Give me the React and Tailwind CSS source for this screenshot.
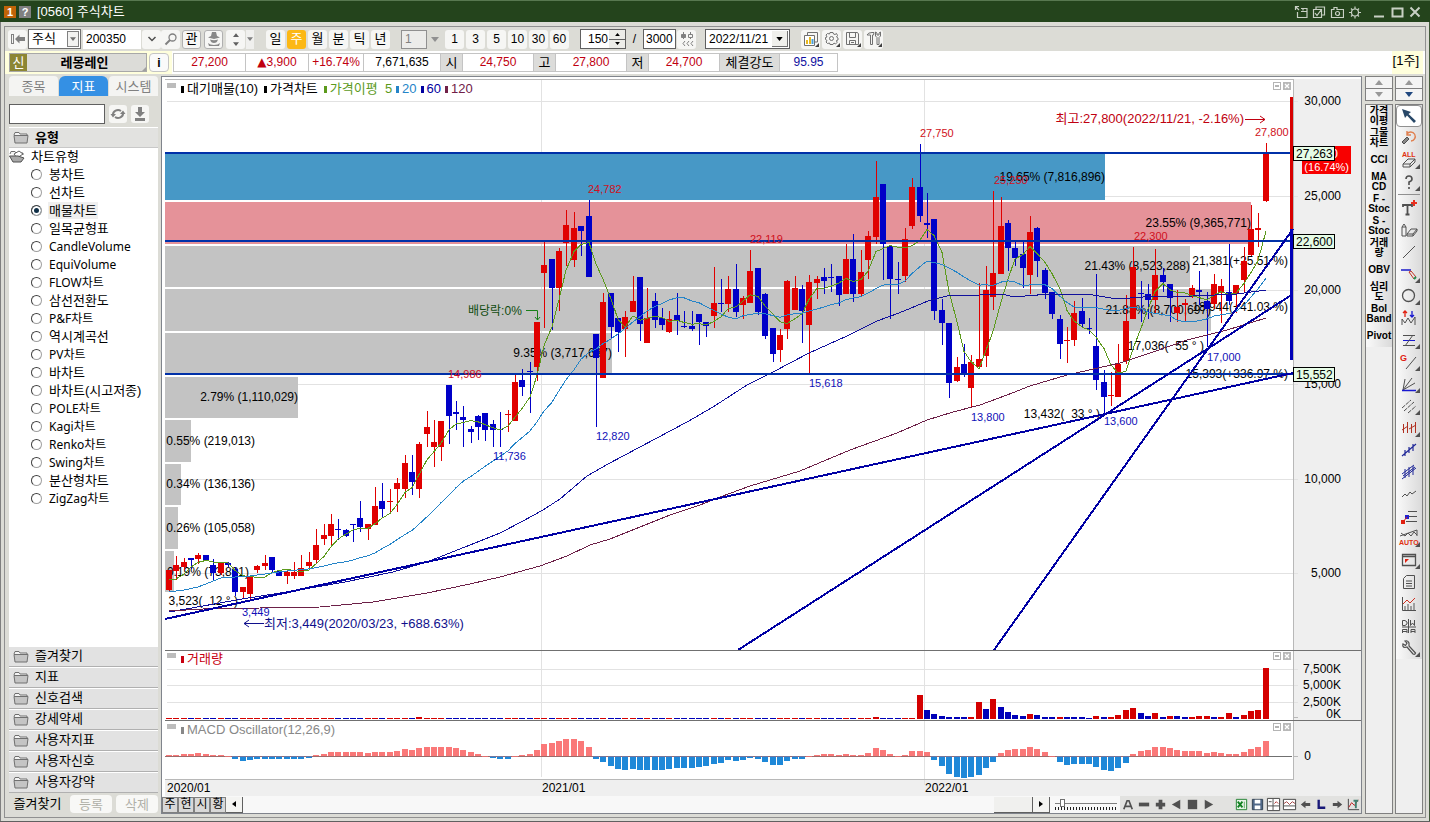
import React, { useState } from 'react';

// [high, bodyTop, bodyBottom, low, direction] in chart coordinates
const CANDLES = [
  [570, 570, 590, 592, 1], [556, 565, 571, 580, 1], [558, 562, 567, 570, 1], [558, 558, 560, 569, 0], [553, 555, 559, 564, 1],
  [555, 555, 560, 560, 0], [559, 565, 573, 581, 0], [562, 562, 573, 575, 1], [562, 563, 565, 567, 0], [567, 569, 592, 596, 0],
  [587, 587, 592, 599, 1], [575, 577, 594, 599, 1], [565, 566, 570, 573, 1], [555, 563, 566, 570, 1], [557, 557, 570, 572, 0],
  [570, 571, 576, 576, 0], [571, 572, 576, 584, 1], [562, 572, 576, 579, 1], [555, 568, 576, 576, 1], [552, 562, 566, 570, 1],
  [529, 545, 560, 564, 1], [524, 535, 539, 545, 1], [514, 524, 536, 545, 1], [519, 529, 530, 540, 0], [529, 530, 536, 537, 0],
  [524, 524, 525, 542, 0], [501, 518, 527, 532, 0], [524, 524, 529, 540, 1], [487, 506, 525, 525, 1], [483, 501, 509, 518, 0],
  [489, 501, 502, 513, 1], [478, 483, 489, 512, 1], [455, 463, 489, 498, 1], [455, 472, 482, 495, 0], [442, 444, 489, 498, 1],
  [411, 427, 434, 447, 1], [420, 442, 447, 467, 1], [421, 421, 447, 461, 1], [385, 385, 416, 444, 0], [401, 412, 414, 430, 0],
  [406, 417, 420, 447, 0], [426, 429, 432, 443, 0], [415, 416, 427, 440, 0], [413, 413, 430, 441, 0], [420, 424, 430, 447, 0],
  [412, 429, 430, 447, 0], [410, 414, 415, 432, 1], [374, 382, 421, 421, 1], [369, 380, 387, 396, 0], [362, 371, 372, 413, 0],
  [322, 322, 367, 381, 1], [242, 265, 273, 328, 1], [259, 259, 288, 330, 0], [248, 251, 288, 311, 1], [210, 225, 243, 266, 1],
  [212, 228, 260, 267, 1], [226, 226, 231, 256, 0], [200, 216, 277, 277, 0], [334, 334, 358, 427, 0], [293, 302, 378, 378, 1],
  [293, 293, 327, 338, 0], [318, 318, 332, 352, 0], [311, 317, 329, 357, 1], [276, 301, 312, 312, 1], [277, 277, 324, 341, 0],
  [288, 318, 343, 343, 1], [293, 301, 320, 328, 0], [308, 318, 325, 330, 0], [311, 319, 332, 333, 1], [293, 315, 321, 335, 0],
  [311, 326, 327, 328, 0], [311, 326, 329, 331, 0], [314, 314, 322, 345, 0], [322, 322, 326, 337, 0], [267, 303, 316, 328, 1],
  [279, 303, 304, 312, 0], [276, 289, 304, 312, 1], [264, 289, 312, 317, 0], [296, 298, 305, 319, 1], [250, 271, 303, 303, 1],
  [268, 268, 312, 315, 0], [293, 294, 336, 339, 0], [328, 328, 354, 362, 0], [329, 335, 350, 362, 1], [280, 281, 329, 339, 1],
  [276, 288, 310, 310, 1], [285, 289, 311, 343, 0], [275, 282, 325, 374, 1], [276, 279, 283, 299, 1], [268, 277, 281, 294, 0],
  [264, 277, 278, 292, 0], [276, 276, 295, 306, 0], [244, 259, 294, 294, 1], [234, 259, 294, 302, 0], [250, 272, 294, 296, 1],
  [231, 236, 260, 279, 1], [161, 197, 237, 244, 1], [184, 184, 244, 280, 0], [245, 246, 279, 319, 0], [262, 279, 280, 294, 0],
  [228, 239, 276, 282, 1], [178, 187, 226, 229, 1], [144, 187, 216, 222, 0], [193, 223, 225, 238, 0], [219, 219, 311, 320, 0],
  [299, 310, 323, 345, 0], [323, 323, 383, 398, 0], [357, 367, 381, 382, 1], [344, 364, 373, 377, 0], [355, 362, 388, 408, 1],
  [283, 359, 367, 368, 1], [266, 290, 356, 367, 1], [191, 273, 297, 310, 1], [197, 226, 274, 274, 1], [220, 223, 248, 271, 0],
  [240, 248, 258, 266, 0], [242, 254, 268, 288, 0], [216, 232, 275, 294, 1], [227, 228, 261, 277, 0], [268, 270, 293, 299, 0],
  [292, 292, 314, 319, 0], [315, 319, 344, 359, 0], [327, 340, 341, 363, 1], [301, 313, 340, 346, 1], [298, 311, 324, 327, 0],
  [318, 328, 329, 334, 0], [274, 346, 380, 390, 0], [370, 382, 397, 414, 0], [372, 395, 396, 406, 1], [344, 364, 397, 397, 1],
  [295, 321, 361, 364, 1], [247, 267, 319, 319, 1], [281, 293, 294, 322, 0], [284, 294, 300, 319, 0], [249, 275, 300, 313, 1],
  [268, 275, 282, 292, 0], [284, 284, 298, 322, 0], [290, 307, 313, 322, 1], [299, 303, 305, 322, 1], [285, 288, 297, 298, 1],
  [271, 290, 292, 305, 0], [292, 301, 309, 347, 0], [274, 284, 304, 309, 1], [279, 286, 292, 323, 1], [244, 292, 301, 305, 0],
  [285, 285, 293, 313, 1], [247, 261, 280, 293, 1], [205, 229, 255, 256, 1], [213, 228, 230, 247, 1], [143, 153, 201, 202, 1],
];

// Positive = up week, negative = down week, starting at candle 102
const VOLUME_START = 102;
const VOLUME = [
  24, -9, -5, -3, -2, -2, -2, 2, 17, -10, 20, -12, -7, -4, -3, 5, -4, -2, -2, 2, -2, -2, -2, -1, 3, -2, 2, 4,
  9, 11, -6, -3, 6, -2, 3, -3, -2, 2, 3, 3, -2, 2, 6, -2, 4, 8, 9, 51,
];

const MACD = [
  1, 1, 2, 2, 3, 2, 1, 1, 0, -2, -4, -3, -2, -2, -2, -2, -2, -2, -2, -1, 1, 2, 4, 4, 4, 4, 4, 3, 4, 4, 4, 5, 7, 6, 8, 9, 9, 9, 9, 8, 6,
  4, 2, 0, -1, -2, -2, 0, 1, 2, 6, 12, 13, 15, 17, 17, 15, 9, -2, -5, -9, -12, -13, -12, -13, -13, -13, -13, -12, -11, -11, -11, -10,
  -9, -7, -6, -3, -4, -3, -1, -2, -5, -8, -8, -4, -2, -2, 0, 1, 2, 2, 1, 2, 1, 1, 3, 8, 6, 2, 0, 1, 5, 5, 4, -3, -9, -17, -20, -21,
  -20, -18, -11, -5, 3, 6, 7, 7, 9, 7, 4, 0, -5, -8, -7, -7, -7, -10, -13, -14, -11, -6, 2, 5, 6, 9, 9, 8, 6, 5, 5, 5, 3, 4, 3, 2, 2,
  4, 7, 9, 15,
];

const MA60 = '169,612 203,606 242,599 293,591 345,582 393,572 427,562 470,545 500,533 523,521 543,510 560,499 587,476 608,464 640,447 687,422 713,407 747,385 773,372 809,353 847,336 877,321 899,313 928,301 947,296 980,295 1003,294 1013,297 1050,294 1093,295 1117,299 1143,297 1193,296 1237,294 1266,290';
const MA120 = '169,611 203,609 260,608 320,607 373,602 427,593 470,584 500,577 540,566 567,556 590,545 610,539 640,527 670,515 700,505 720,497 750,486 800,471 850,450 897,433 927,420 953,412 980,405 1007,395 1030,386 1067,375 1120,363 1153,352 1187,340 1227,330 1266,318';

const PROFILE = [
  [153, 47, 1105, '#4798c6'], [202, 42, 1251, '#e59299'], [246, 41, 1190, '#c3c3c3'], [289, 42, 1211, '#c3c3c3'],
  [333, 41, 612, '#c3c3c3'], [377, 41, 298, '#c3c3c3'], [420, 42, 191, '#c3c3c3'], [464, 41, 181, '#c3c3c3'],
  [507, 42, 178, '#c3c3c3'], [551, 41, 174, '#c3c3c3'],
];

const PROFILE_LABELS = [
  [1105, 181, '19.65% (7,816,896)'], [1251, 227, '23.55% (9,365,771)'], [1190, 270, '21.43% (8,523,288)'], [1211, 314, '21.88% (8,700,697)'],
  [612, 357, '9.35% (3,717,637)'], [298, 401, '2.79% (1,110,029)'], [255, 445, '0.55% (219,013)'], [255, 488, '0.34% (136,136)'],
  [255, 532, '0.26% (105,058)'], [249, 576, '0.19% (73,891)'],
];

const TREND_LABELS = [
  [238, 605, '3,523(  12 ° )'], [1100, 418, '13,432(  33 ° )'], [1204, 350, '17,036(  55 ° )'],
  [1288, 265, '21,381(+25.51 %)'], [1288, 311, '18,944(+41.03 %)'], [1288, 378, '15,393(+336.97 %)'],
];

const HIGHS = [
  [448, 378, '14,986'], [588, 193, '24,782'], [750, 243, '22,119'], [920, 137, '27,750'], [994, 184, '25,250'], [1134, 240, '22,300'], [1255, 136, '27,800'],
];
const LOWS = [
  [242, 616, '3,449'], [493, 460, '11,736'], [596, 440, '12,820'], [809, 387, '15,618'], [971, 421, '13,800'], [1104, 425, '13,600'], [1207, 361, '17,000'],
];

const RED = '#e00000';
const BLUE = '#0000c8';
const xAt = (i) => Math.round(169 + i * 7.36);
const closes = CANDLES.map(([, top, bottom, , up]) => (up ? top : bottom));

function movingAverage(period, lead) {
  const points = lead.map(([i, y]) => `${xAt(i)},${y}`);
  for (let i = period - 1; i < closes.length; i++) {
    const sum = closes.slice(i - period + 1, i + 1).reduce((a, b) => a + b, 0);
    points.push(`${xAt(i)},${(sum / period).toFixed(1)}`);
  }
  return points.join(' ');
}

const MA5 = movingAverage(5, [[0, 580], [1, 579], [2, 574], [3, 567]]);
const MA20 = movingAverage(20, [[0, 592], [2, 590], [4, 587], [7, 578], [9, 577], [11, 576], [14, 573], [16, 571]]);

function StockChart() {
  return (
    <svg viewBox="165 79 1196 717" className="block h-full w-full font-['Liberation_Sans','Noto_Sans_CJK_KR',sans-serif] text-xs" preserveAspectRatio="xMinYMin meet">
      <rect x="165" y="79" width="1196" height="717" fill="#efefef" />
      <rect x="165" y="79" width="1128" height="700" fill="#fff" />
      <g shapeRendering="crispEdges">
        {[101, 196, 290, 384, 479, 573, 669, 685, 702].map((y) => (
          <path key={y} d={`M167 ${y}.5H1298`} stroke="#e2e2e2" />
        ))}
        <path d="M541.5 79V777M924.5 79V785" stroke="#e2e2e2" />
        {PROFILE.map(([y, h, x2, fill]) => (
          <rect key={y} x="165" y={y} width={x2 - 165} height={h} fill={fill} />
        ))}
        <path d="M165 79.5H1293.5V779.5H165" fill="none" stroke="#b8b8b8" />
      </g>

      <g fill="#000">
        {PROFILE_LABELS.map(([x, y, t]) => <text key={t} x={x} y={y} textAnchor="end">{t}</text>)}
        {TREND_LABELS.map(([x, y, t]) => <text key={t} x={x} y={y} textAnchor="end" className="whitespace-pre">{t}</text>)}
      </g>

      {/* Candles */}
      <g shapeRendering="crispEdges">
        {CANDLES.map(([high, top, bottom, low, up], i) => (
          <g key={i} fill={up ? RED : BLUE}>
            <rect x={xAt(i)} y={high} width="1" height={low - high} />
            <rect x={xAt(i) - 3} y={top} width="6" height={bottom - top} />
          </g>
        ))}
      </g>

      {/* Moving averages */}
      <g fill="none" strokeWidth="1" shapeRendering="crispEdges">
        <polyline points={MA5} stroke="#5c9a1c" />
        <polyline points={MA20} stroke="#2484c8" />
        <polyline points={MA60} stroke="#10109c" />
        <polyline points={MA120} stroke="#6c2048" />
      </g>

      {/* Trend and support lines */}
      <g strokeWidth="2" shapeRendering="crispEdges">
        <path d="M165 153H1293M165 241H1293M165 374H1293" stroke="#0030a8" />
        <path d="M165 619L1293 373M738 650L1293 294M994 650L1293 229" stroke="#0000a4" />
      </g>
      <rect x="1290" y="97" width="3" height="132" fill="#d80000" />
      <rect x="1290" y="229" width="3" height="131" fill="#0000b8" />

      <g className="text-[11px]" fill="#d01020">
        {HIGHS.map(([x, y, t]) => <text key={t} x={x} y={y}>{t}</text>)}
      </g>
      <g className="text-[11px]" fill="#1010b8">
        {LOWS.map(([x, y, t]) => <text key={t} x={x} y={y}>{t}</text>)}
      </g>
      <text x="1244" y="123" textAnchor="end" className="text-[13px]" fill="#c00010">최고:27,800(2022/11/21, -2.16%)</text>
      <path d="M1245 119.5H1265M1260 116L1265 119.5L1260 123" fill="none" stroke="#c00010" />
      <text x="264" y="628" className="text-[13px]" fill="#10108c">최저:3,449(2020/03/23, +688.63%)</text>
      <path d="M264 623.5H244M249 620L244 623.5L249 627" fill="none" stroke="#10108c" />
      <text x="468" y="315" fill="#104c10">배당락:0%</text>
      <path d="M526 310.5H537.5V320M535 317L537.5 320L540 317" fill="none" stroke="#188018" />

      {/* Volume */}
      <g shapeRendering="crispEdges">
        {CANDLES.map(([, , , , up], i) => {
          const v = i >= VOLUME_START ? VOLUME[i - VOLUME_START] : 0;
          const h = Math.abs(v) || (i === 34 || i === 96 ? 2 : 1);
          const rising = v ? v > 0 : up;
          return <rect key={i} x={xAt(i) - 3} y={719 - h} width="6" height={h} fill={rising ? '#d40000' : '#0000b8'} />;
        })}
        <path d="M165 756.5H1292" stroke="#707070" />
        {MACD.map((v, i) => (
          <rect key={i} x={xAt(i) - 3} y={v >= 0 ? 756 - v : 756} width="6" height={Math.max(1, Math.abs(v) + (v < 0 ? 1 : 0))} fill={v < 0 ? '#1e88d8' : '#fa7878'} />
        ))}
        <path d="M165 756.5H1266" stroke="#c86868" opacity=".5" />
        <path d="M165 650.5H1361M165 720.5H1361" stroke="#707070" />
        <path d="M1294 756.5H1298M1294 717.5H1298" stroke="#b8b8b8" />
      </g>

      {/* Axis labels */}
      <g textAnchor="end" fill="#000">
        <text x="1341" y="105">30,000</text>
        <text x="1341" y="200">25,000</text>
        <text x="1341" y="294">20,000</text>
        <text x="1341" y="388">15,000</text>
        <text x="1341" y="483">10,000</text>
        <text x="1341" y="577">5,000</text>
        <text x="1341" y="673">7,500K</text>
        <text x="1341" y="689">5,000K</text>
        <text x="1341" y="706">2,500K</text>
        <text x="1341" y="718">0K</text>
        <text x="1311" y="760">0</text>
      </g>
      <text x="167" y="792">2020/01</text>
      <text x="542" y="792">2021/01</text>
      <text x="925" y="792">2022/01</text>

      {/* Price tags */}
      <rect x="1302" y="146" width="49" height="28" fill="#f80000" />
      <text x="1338" y="158" textAnchor="end" fill="#fff">27,200</text>
      <text x="1349" y="171" textAnchor="end" className="text-[11px]" fill="#fff">(16.74%)</text>
      {[[146, '27,263'], [234, '22,600'], [367, '15,552']].map(([y, t]) => (
        <g key={t}>
          <rect x="1293.5" y={y + 0.5} width="41" height="14" fill="#e6fce6" stroke="#000" />
          <text x="1296" y={y + 12}>{t}</text>
        </g>
      ))}
    </svg>
  );
}

function PaneButtons() {
  return (
    <div className="flex gap-0.5">
      <button aria-label="최대화" className="flex h-2 w-2 items-center justify-center border border-[#b4b4b4] bg-white">
        <span className="h-0.5 w-1 bg-[#b4b4b4]" />
      </button>
      <button aria-label="닫기" className="flex h-2 w-2 items-center justify-center bg-[#b8b8b8]">
        <svg viewBox="0 0 8 8" className="h-2 w-2"><path d="M2 2L6 6M6 2L2 6" stroke="#fff" strokeWidth="1.3" /></svg>
      </button>
    </div>
  );
}

function LegendMark({ className }) {
  return <span className={`mr-[3px] h-[7px] w-[3px] ${className}`} />;
}

function FolderIcon({ open }) {
  return (
    <svg viewBox="0 0 16 13" className="h-[13px] w-4 shrink-0">
      <path d="M1 4L2 1.5H6L7 3H14V5" fill="#f4f4f4" stroke="#707070" />
      {open ? (
        <>
          <path d="M5 4L10 1L14 4L8 8Z" fill="#fff" stroke="#606060" />
          <path d="M0.5 6H9L15 8L12 12H4Z" fill="#a8a8a8" stroke="#505050" />
        </>
      ) : (
        <path d="M1 4.5H15L14 12H2Z" fill="#c4c4c4" stroke="#707070" />
      )}
    </svg>
  );
}

const CHART_TYPES = [
  '봉차트', '선차트', '매물차트', '일목균형표', 'CandleVolume', 'EquiVolume', 'FLOW차트', '삼선전환도', 'P&F차트', '역시계곡선',
  'PV차트', '바차트', '바차트(시고저종)', 'POLE차트', 'Kagi차트', 'Renko차트', 'Swing차트', '분산형차트', 'ZigZag차트',
];
const SECTIONS = ['즐겨찾기', '지표', '신호검색', '강세약세', '사용자지표', '사용자신호', '사용자강약'];

function Sidebar() {
  const [chartType, setChartType] = useState('매물차트');
  const smallButton = 'flex h-[18px] w-[18px] items-center justify-center rounded-[3px] bg-[#f6f6f4]';

  return (
    <aside className="flex w-[149px] shrink-0 flex-col text-[13px]">
      <div className="flex h-5 shrink-0 gap-px text-center leading-[19px]">
        <button className="flex-1 rounded-t bg-[#f4f4f2] text-[#808080]">종목</button>
        <button className="flex-1 rounded-t-md bg-[#3490e4] text-white">지표</button>
        <button className="flex-1 rounded-t bg-[#f4f4f2] text-[#808080]">시스템</button>
      </div>
      <div className="flex h-[31px] shrink-0 items-center gap-1 pt-1">
        <input aria-label="지표 검색" className="h-5 w-24 border border-[#606060] bg-white px-1" />
        <button aria-label="새로고침" className={smallButton}>
          <svg viewBox="0 0 16 16" className="h-4 w-4" fill="none" stroke="#808080" strokeWidth="2">
            <path d="M3 9A5 4.500 0 0 1 11 5M13 7A5 4.500 0 0 1 5 11" />
            <path d="M0.500 8H6L3 11.500ZM10 8H15.500L13 4.500Z" fill="#808080" stroke="none" />
          </svg>
        </button>
        <button aria-label="내려받기" className={smallButton}>
          <svg viewBox="0 0 16 16" className="h-4 w-4" fill="#808080">
            <path d="M6 1H10V6H13L8 11L3 6H6ZM3 12H13V15H3Z" />
          </svg>
        </button>
      </div>
      <button className="flex h-5 shrink-0 items-center gap-1.5 border-t border-white bg-[#e2e2e0] pl-1 text-left font-bold">
        <FolderIcon />유형
      </button>
      <div className="min-h-0 flex-1 overflow-hidden border-t border-[#c8c8c8] bg-white">
        <div className="flex h-[17px] items-center gap-1.5 leading-[17px]"><FolderIcon open />차트유형</div>
        {CHART_TYPES.map((type) => (
          <label key={type} className="flex h-[18px] items-center pl-[22px]">
            <input
              type="radio"
              name="chartType"
              checked={chartType === type}
              onChange={() => setChartType(type)}
              className="h-[11px] w-[11px] shrink-0 appearance-none rounded-full border border-[#404040] border-r-[#a0a0a0] border-b-[#a0a0a0] bg-white checked:bg-[#103048] checked:shadow-[inset_0_0_0_2px_#fff]"
            />
            <span className={`ml-1.5 px-px leading-[17px] ${/[A-Z]/.test(type) ? "font-['Noto_Sans','Noto_Sans_CJK_KR',sans-serif] text-xs leading-[17px]" : ''} ${chartType === type ? 'bg-[#efefef]' : ''}`}>
              {type}
            </span>
          </label>
        ))}
      </div>
      {SECTIONS.map((section) => (
        <button key={section} className="flex h-[21px] shrink-0 items-center gap-1.5 border-t border-b border-t-white border-b-[#b0b0b0] bg-[#e2e2e2] pb-px pl-1 text-left">
          <FolderIcon />{section}
        </button>
      ))}
      <div className="flex h-[21px] shrink-0 items-center gap-1 pt-px">
        <button className="w-[57px]">즐겨찾기</button>
        <button disabled className="h-[18px] flex-1 rounded bg-[#f8f8f6] leading-[17px] text-[#b0b0a8]">등록</button>
        <button disabled className="h-[18px] flex-1 rounded bg-[#f8f8f6] leading-[17px] text-[#b0b0a8]">삭제</button>
      </div>
    </aside>
  );
}

function ToolButton({ children, active, label, className = '' }) {
  return (
    <button
      aria-label={label}
      className={`flex h-[19px] min-w-[19px] shrink-0 items-center justify-center rounded-[3px] leading-[18px] ${active ? 'bg-[#fcb814] text-white' : 'bg-[#f6f6f4]'} ${className}`}
    >
      {children}
    </button>
  );
}

function Triangle({ down, className = 'h-[5px] w-2 text-[#808080]' }) {
  return (
    <svg viewBox="0 0 8 5" className={`shrink-0 ${className}`} fill="currentColor">
      <path d={down ? 'M0 0H8L4 5Z' : 'M0 5H8L4 0Z'} />
    </svg>
  );
}

function Toolbar() {
  return (
    <div className="flex h-6 shrink-0 items-center pl-[3px] text-xs">
      <ToolButton label="처음으로">
        <svg viewBox="0 0 16 12" className="h-3 w-4" fill="#808080"><path d="M1 1H4V11H1ZM2 2V10H3V2ZM5 6L9.500 1.500V4H15V8H9.500V10.500Z" fillRule="evenodd" /></svg>
      </ToolButton>
      <div className="relative ml-px h-5 w-[53px] border border-[#707070] bg-white">
        <select aria-label="종목구분" className="h-full w-full appearance-none bg-transparent pl-[3px] text-[13px] leading-4 outline-none"><option>주식</option></select>
        <span className="pointer-events-none absolute top-px right-px flex h-4 w-3 items-center justify-center border border-[#808080] bg-[#f2f2f0]"><Triangle down className="h-1 w-1.5 text-[#707070]" /></span>
      </div>
      <input aria-label="종목코드" defaultValue="200350" className="ml-0.5 h-[19px] w-[58px] bg-white pl-[3px]" />
      <ToolButton label="종목 목록" className="ml-px">
        <svg viewBox="0 0 10 6" className="h-1.5 w-2.5"><path d="M1.500 1L5 4.500L8.500 1" fill="none" stroke="#505050" strokeWidth="1.500" /></svg>
      </ToolButton>
      <ToolButton label="종목 검색">
        <svg viewBox="0 0 14 14" className="h-3.5 w-3.5" fill="none" stroke="#808080"><circle cx="8.500" cy="5.500" r="3.500" strokeWidth="1.300" /><path d="M6 8L1.500 12.500" strokeWidth="2" /></svg>
      </ToolButton>
      <ToolButton className="ml-0.5 border border-[#b0b0b0] text-[13px]">관</ToolButton>
      <ToolButton label="관심종목" className="ml-[3px] border border-[#b0b0b0]">
        <svg viewBox="0 0 14 14" className="h-3.5 w-3.5" fill="#888"><path d="M5 0H9L10 4L13 5.500L7 7L1 5.500L4 4ZM3 7.500Q7 9 11 7.500Q10 11 7 11Q4 11 3 7.500ZM1 11Q3 13 7 13Q11 13 13 11L12 14H2Z" /></svg>
      </ToolButton>
      <ToolButton label="이전 다음" className="ml-[3px] flex-col gap-[5px]">
        <Triangle className="h-1 w-1.5 text-[#606060]" /><Triangle down className="h-1 w-1.5 text-[#606060]" />
      </ToolButton>
      <button aria-label="종목 이동 설정" className="ml-px flex h-[19px] w-2 items-center justify-center bg-[#f0f0ee]"><Triangle down className="h-1 w-1.5 text-[#808080]" /></button>

      <div className="ml-3 flex gap-0.5 text-[13px]">
        {['일', '주', '월', '분', '틱', '년'].map((p) => <ToolButton key={p} active={p === '주'}>{p}</ToolButton>)}
      </div>
      <input aria-label="주기" disabled defaultValue="1" className="ml-[11px] h-[19px] w-[26px] border border-[#909090] bg-[#ececea] pl-[3px] text-[#808080]" />
      <button aria-label="주기 선택" className="flex h-[19px] w-[15px] items-center justify-center"><Triangle down className="h-[5px] w-2 text-[#909090]" /></button>
      <div className="ml-[3px] flex gap-0.5">
        {['1', '3', '5', '10', '30', '60'].map((n) => <ToolButton key={n}>{n}</ToolButton>)}
      </div>
      <div className="ml-[11px] flex h-5 w-[46px] border border-[#606060] bg-white">
        <input aria-label="표시 개수" defaultValue="150" className="w-[27px] bg-white text-right" />
        <div className="ml-px flex flex-1 flex-col bg-[#ecece8]">
          <button aria-label="증가" className="flex flex-1 items-center justify-center border-b border-[#606060]"><Triangle className="h-[3px] w-[5px] text-black" /></button>
          <button aria-label="감소" className="flex flex-1 items-center justify-center"><Triangle down className="h-[3px] w-[5px] text-black" /></button>
        </div>
      </div>
      <span className="w-[17px] text-center">/</span>
      <input aria-label="전체 개수" defaultValue="3000" className="h-5 w-[33px] border border-[#606060] bg-white pl-[2px]" />
      <ToolButton label="이전 조회" className="ml-px">
        <svg viewBox="0 0 14 16" className="h-4 w-3.5" fill="none" stroke="#808080"><path d="M3.500 1V8M10.500 1V3M10.500 7V8M5 10L3 12.500L5 15M9 10L7 12.500L9 15M13 10L11 12.500L13 15" /><path d="M1.500 3.500H5.500V6.500H1.500Z" fill="#808080" /><path d="M8.500 3.500H12.500V6.500H8.500Z" /></svg>
      </ToolButton>
      <div className="relative ml-[9px] h-5 w-[85px] border border-[#606060] bg-white">
        <select aria-label="조회일" className="h-full w-full appearance-none bg-transparent pl-[3px] outline-none"><option>2022/11/21</option></select>
        <span className="pointer-events-none absolute top-px right-px flex h-4 w-4 items-center justify-center border-r border-b border-[#707070] bg-[#f0f0ec]"><Triangle down className="h-1 w-[7px] text-black" /></span>
      </div>
      <div className="ml-[11px] flex gap-0.5">
        <ToolButton label="차트 추가">
          <svg viewBox="0 0 16 16" className="h-4 w-4" fill="none" stroke="#707070"><path d="M4.500 4V1.500H14.500V11H12" /><path d="M1.500 4.500H11.500V14.500H1.500Z" fill="#fff" /><path d="M4 13V9" stroke="#e8b820" strokeWidth="2" /><path d="M7 13V6" stroke="#e8b820" strokeWidth="2" /><path d="M9.500 13V8" stroke="#48a0d8" strokeWidth="2" /><path d="M16 12V16H12Z" fill="#404040" stroke="none" /></svg>
        </ToolButton>
        <ToolButton label="환경설정">
          <svg viewBox="0 0 16 16" className="h-4 w-4" fill="none" stroke="#707070"><path d="M6 1.500H9L9.500 3L11 3.500L12.500 2.500L13.500 4.500L12.500 6L14 7V9L12.500 9.500L13 11.500L11.500 13L10 12L9 13.500H6L5.500 12L3.500 12.500L2 11L3 9.500L1.500 8.500V6.500L3 6L2 4L3.500 2.500L5.500 3Z" /><circle cx="7.500" cy="7.500" r="2" /><path d="M16 12V16H12Z" fill="#404040" stroke="none" /></svg>
        </ToolButton>
        <ToolButton label="저장">
          <svg viewBox="0 0 16 16" className="h-4 w-4" fill="none" stroke="#707070"><path d="M1.500 1.500H12.500L13.500 3V13.500H1.500Z" /><path d="M4.500 2V6.500H10.500V2M4.500 13V9.500H10.500V13M6 11.500H9" /><path d="M16 12V16H12Z" fill="#404040" stroke="none" /></svg>
        </ToolButton>
        <ToolButton label="도구">
          <svg viewBox="0 0 16 16" className="h-4 w-4" fill="none" stroke="#707070"><path d="M1 4Q2 1.500 6 1.500H8L7.500 4H6.500V13.500H4.500V4H1.500ZM9.500 1V5L11 6.500V13.500H13V6.500L14.500 5V1L13 2V4H11V2Z" /><path d="M16 12V16H12Z" fill="#404040" stroke="none" /></svg>
        </ToolButton>
      </div>
    </div>
  );
}

function QuoteBar() {
  const cell = 'border border-[#c4c4c4] bg-white p-0 text-center font-normal';
  const head = 'border border-[#c4c4c4] bg-[#dcdcda] p-0 text-center text-[13px] font-normal';
  return (
    <div className="flex h-[23px] shrink-0 items-center bg-white">
      <div className="flex h-full items-center bg-[#ffffdc] pr-[3px] pl-1">
        <div className="flex h-[19px] w-[138px] border border-[#a8a8a8] bg-[#dcdcd8] text-[13px] leading-[17px]">
          <span className="w-[17px] bg-[#8c8634] text-center text-white">신</span>
          <span className="flex-1 text-center font-bold">레몽레인</span>
          <svg viewBox="0 0 4 4" className="h-1 w-1 self-end"><path d="M4 0V4H0Z" fill="#a0a0a0" /></svg>
        </div>
        <button className="ml-0.5 h-[19px] w-5 rounded border border-[#c4c4c4] bg-[#fafafa] text-xs leading-4 font-bold">i</button>
      </div>
      <table className="ml-px h-[19px] w-[665px] table-fixed border-collapse text-xs leading-[17px]">
        <tbody>
          <tr>
            <td className={`${cell} w-[72px] text-[#c00010]`}>27,200</td>
            <td className={`${cell} w-[63px] text-[#c00010]`}><span className="font-['DejaVu_Sans']">▲</span>3,900</td>
            <td className={`${cell} w-[55px] text-[#c00010]`}>+16.74%</td>
            <td className={`${cell} w-[77px]`}>7,671,635</td>
            <th className={`${head} w-[22px]`}>시</th>
            <td className={`${cell} w-[71px] text-[#c00010]`}>24,750</td>
            <th className={`${head} w-[22px]`}>고</th>
            <td className={`${cell} w-[71px] text-[#c00010]`}>27,800</td>
            <th className={`${head} w-[22px]`}>저</th>
            <td className={`${cell} w-[71px] text-[#c00010]`}>24,700</td>
            <th className={`${head} w-[60px]`}>체결강도</th>
            <td className={`${cell} text-[#1010a0]`}>95.95</td>
          </tr>
        </tbody>
      </table>
      <span className="mr-0.5 ml-auto h-full bg-[#ffffdc] pr-1 pl-px text-[13px] leading-5">[1주]</span>
    </div>
  );
}

function ScrollArrows({ active }) {
  return (
    <div className="flex h-[25px] shrink-0 flex-col border border-[#808080] bg-[#f4f4f4]">
      <button aria-label="위로" className="flex flex-1 items-center justify-center border-b border-[#808080]"><Triangle className="h-[5px] w-2 text-[#989898]" /></button>
      <button aria-label="아래로" className="flex flex-1 items-center justify-center"><Triangle down className={`h-[5px] w-2 ${active ? 'text-[#204880]' : 'text-[#989898]'}`} /></button>
    </div>
  );
}

const INDICATORS = [
  ['가격', '이평'], ['그물', '차트'], ['CCI'], ['MA', 'CD'], ['F -', 'Stoc'], ['S -', 'Stoc'], ['거래', '량'], ['OBV'], ['심리', '도'], ['Bol', 'Band'], ['Pivot'],
];

// Drawing tools, 18x18 each; `more` adds the corner mark
const DRAW_TOOLS = [
  { name: '선택', more: false, icon: <path d="M2 2L11 5L8.500 7L16 14L14 16L7 8.500L5 11Z" fill="#284868" stroke="none" /> },
  { name: '되돌리기', icon: <><path d="M7 5A4.500 4.500 0 1 1 11 12M7 2V6H11" stroke="#e08050" strokeWidth="1.400" /><path d="M2 13L7 8L9 10L4 15Z" fill="#888" /></> },
  { name: '전체 지우기', more: true, icon: <><text x="2" y="6" fontSize="7" fontWeight="bold" fill="#e03010" stroke="none">ALL</text><path d="M3 13L8 8H15L10 13ZM3 13V16H10V13M10 16L15 11V8" /></> },
  { name: '도움말', more: true, icon: <path d="M6 6Q6 3 9 3Q12 3 12 6Q12 8 9 9V12M9 14V16" strokeWidth="1.600" /> },
  { name: '문자', icon: <><path d="M3 8V6H12V8M7.500 6V15M5.500 15.500H9.500" strokeWidth="1.800" /><path d="M14 1V7M11 4H17" stroke="#e83020" strokeWidth="2" /></> },
  { name: '지우개', icon: <path d="M2 6H6V15H2ZM2 6L4 3L6 6M7 13L11 8H17L13 13ZM7 13V15H13V13M13 15L17 10V8" /> },
  { name: '추세선', icon: <path d="M3 15L15 3" /> },
  { name: '수평선', more: true, icon: <><path d="M1 5H11" stroke="#1818c8" strokeWidth="1.500" /><path d="M9 7L11 6L16 12L14 14Z" stroke="#c03020" /><path d="M14 14L16 12" stroke="#209050" strokeWidth="2" /></> },
  { name: '원', more: true, icon: <circle cx="8.500" cy="8.500" r="6" strokeWidth="1.300" /> },
  { name: '고저점', icon: <><path d="M2 16V10L5 14L8 9L11 14L15 8V16" /><path d="M5 8V2M3 4L5 2L7 4" stroke="#e02010" strokeWidth="1.300" /><path d="M12 2V8M10 6L12 8L14 6" stroke="#1818d0" strokeWidth="1.300" /></> },
  { name: '피보나치', more: true, icon: <><path d="M3 4.500H15M3 14.500H15" /><path d="M3 9.500H15" stroke="#1818d0" /><path d="M13 4L5 15" /></> },
  { name: '갠', more: true, icon: <><text x="0" y="8" fontSize="9" fontWeight="bold" fill="#e02010" stroke="none">G</text><path d="M6 16L16 4" /></> },
  { name: '팬', more: true, icon: <><path d="M3 15L5 4M3 15L12 3M3 15L15 8" /><path d="M2 15.500H16" stroke="#1818d0" strokeWidth="1.500" /></> },
  { name: '평행선', more: true, icon: <path d="M2 11L11 3M4 14L14 5M8 16L16 9" strokeDasharray="4 1" /> },
  { name: '주기선', more: true, icon: <path d="M3.500 5V14M7.500 3V14M11.500 5V14M15.500 3V14M2 11L8 7M9 10L16 6" stroke="#b03020" /> },
  { name: '회귀선', icon: <path d="M2 15L16 3M5 9V15M9 6V12M13 3V10" stroke="#202898" strokeWidth="1.200" /> },
  { name: '회귀채널', icon: <path d="M2 11L14 2M2 16L16 5M5 6V15M9 4V14M13 3V12M3 13L15 4" stroke="#202898" /> },
  { name: '파동선', icon: <path d="M2 12L5 9L7 11L10 7L12 9L16 6" /> },
  { name: '가격선', icon: <><path d="M8 4.500H17M8 9.500H17M6 14.500H17" /><path d="M5 8H9V12H5Z" fill="#2020d0" stroke="none" /><path d="M1 13H5V17H1Z" fill="#e02010" stroke="none" /><path d="M3 15L7 10" stroke="#e02010" /></> },
  { name: '자동추세', more: true, icon: <><path d="M0 7L17 1V7M1 4L5 7L8 4L11 7L14 3L17 6" /><text x="-1" y="16" fontSize="7" fontWeight="bold" fill="#e03010" stroke="none">AUTO</text></> },
  { name: '화면', more: true, icon: <><path d="M2.500 3.500H15.500V14.500H2.500ZM2.500 5.500H15.500" strokeWidth="1.300" /><path d="M5 8H9L5 12Z" fill="#e02010" stroke="none" /></> },
  { name: '메모', icon: <path d="M6.500 2.500H14.500V15.500H3.500V5.500ZM6 8H12M6 10.500H12M6 13H12" /> },
  { name: '지표차트', icon: <><path d="M2.500 2V15.500H16" /><path d="M5 15V11M8 15V9M11 15V11M14 15V8" stroke="#888" strokeWidth="1.500" /><path d="M3 9L7 5L10 8L15 3" stroke="#d03020" /></> },
  { name: '일주월', icon: <path d="M2.500 3.500H5L7 5V7L5 8.500H2.500ZM10.500 3V8.500L12.500 6L14.500 8.500V3M8.500 2V16M2 10H16M2.500 16V12.500H7V16M2.500 14.500H7M11 16V12.500H15V16M11 14.500H15" /> },
  { name: '도구 설정', more: true, icon: <path d="M3 5Q2 8 5 8.500L7 8L13 15Q15 16 15.500 14L9 7L9 4Q8 1 5 2L7 4L5.500 6.500Z" strokeWidth="1.200" /> },
];

function RightTools() {
  return (
    <>
      <div className="ml-[3px] flex w-7 shrink-0 flex-col gap-[3px]">
        <ScrollArrows />
        <div className="min-h-0 flex-1 border border-[#808080] bg-[#efefef]">
          <div className="bg-gradient-to-r from-[#fafafa] to-[#dadada]">
            {INDICATORS.map((lines) => (
              <button key={lines.join('')} className="flex h-[22px] w-full flex-col items-center justify-center text-[10px] leading-[10px] font-bold">
                {lines.map((line) => <span key={line} className="whitespace-nowrap">{line}</span>)}
              </button>
            ))}
          </div>
        </div>
      </div>
      <div className="ml-0.5 flex w-7 shrink-0 flex-col gap-[3px]">
        <ScrollArrows active />
        <div className="min-h-0 flex-1 border border-[#808080] bg-[#efefef]">
          <div className="bg-gradient-to-r from-[#fafafa] to-[#dadada]">
            {DRAW_TOOLS.map((tool, i) => (
              <React.Fragment key={tool.name}>
                {i === 4 && <div className="mx-0.5 mt-px mb-0.5 h-px bg-[#909090]" />}
                <button
                  aria-label={tool.name}
                  className={`flex h-[22px] w-full items-center justify-center ${i === 0 ? 'rounded border border-[#909090] bg-white' : ''}`}
                >
                  <svg viewBox="0 0 22 18" className="h-[18px] w-[22px] overflow-visible font-['Liberation_Sans']" fill="none" stroke="#505050">
                    <g transform="translate(2 0)">{tool.icon}</g>
                    {tool.more && <path d="M22 13V18H17Z" fill="#505050" stroke="none" />}
                  </svg>
                </button>
              </React.Fragment>
            ))}
          </div>
        </div>
      </div>
    </>
  );
}

const BOTTOM_ICONS = [
  ['글자', <path d="M3 13L6.500 4H8.500L12 13M4.500 10H10.500" fill="none" stroke="#505050" strokeWidth="1.800" />],
  ['축소', <path d="M2 6H13V10H2Z" />],
  ['확대', <path d="M6 3H10V6H13V10H10V13H6V10H3V6H6Z" />],
  ['이전', <path d="M12 3V13L3 8Z" />],
  ['정지', <path d="M3 3H13V13H3Z" />],
  ['재생', <path d="M4 3V13L13 8Z" />],
];
const BOTTOM_ICONS_RIGHT = [
  ['엑셀', <><path d="M2.500 2.500H13.500V13.500H2.500Z" fill="#e8f4e8" stroke="#208030" /><path d="M4 5L9 11M9 5L4 11" stroke="#108020" strokeWidth="2" /><path d="M11 5V12" stroke="#60a868" /></>],
  ['저장', <><path d="M2.500 2.500H13.500V13.500H2.500Z" fill="#506888" stroke="#304050" /><path d="M5 3H11V7H5ZM5 9H11V13H5Z" fill="#fff" /></>],
  ['분할', <><path d="M1.500 1.500H14.500V14.500H1.500Z" fill="#fff" stroke="#404040" /><path d="M7.500 2V14M2 9.500H14M3 5H6" fill="none" stroke="#505050" /><path d="M9 7L11 5L13 7" fill="none" stroke="#b03030" /></>],
  ['차트', <><path d="M1.500 2.500H14.500V13.500H1.500Z" fill="#fff" stroke="#404040" /><path d="M2 9.500H14" stroke="#505050" /><path d="M2 7L5 5L8 8L11 5L14 7" fill="none" stroke="#a04040" /></>],
  ['왼쪽', <path d="M3 8L8 4V6.500H13V9.500H8V12Z" />],
  ['로그', <path d="M5 3V11.500H12" fill="none" stroke="#181878" strokeWidth="2.500" />],
  ['오른쪽', <path d="M13 8L8 4V6.500H3V9.500H8V12Z" />],
  ['차트 설정', <><path d="M2.500 2V13.500H14" fill="none" stroke="#404040" /><path d="M3 11L6 6L9 9L13 3" fill="none" stroke="#c02020" /><path d="M8 3H13V5H11.500V12H9.500V5H8Z" fill="#408070" /></>],
];

function BottomIcon({ name, children }) {
  return (
    <button aria-label={name} className="flex h-4 w-4 items-center justify-center">
      <svg viewBox="0 0 16 16" className="h-[15px] w-[15px]" fill="#505050">{children}</svg>
    </button>
  );
}

function BottomBar() {
  return (
    <div className="flex h-[17px] shrink-0 items-center bg-[#f8f8f8]">
      {['주', '현', '시', '황'].map((t) => (
        <button key={t} className="h-4 w-4 border border-[#808080] bg-[#d8d8d8] text-xs leading-[13px]">{t}</button>
      ))}
      <button aria-label="왼쪽으로" className="flex h-4 w-[17px] items-center justify-center border-r border-b border-[#606060] bg-[#f4f4f2]">
        <svg viewBox="0 0 4 6" className="h-1.5 w-1"><path d="M4 0V6L0 3Z" /></svg>
      </button>
      <div className="flex flex-1 justify-end">
        <div className="h-4 w-[39px] border-r border-b border-[#606060] bg-[#f0f0ee]" />
      </div>
      <button aria-label="오른쪽으로" className="flex h-4 w-[17px] items-center justify-center border-r border-b border-[#606060] bg-[#f4f4f2]">
        <svg viewBox="0 0 4 6" className="h-1.5 w-1"><path d="M0 0V6L4 3Z" /></svg>
      </button>
      <div className="mr-[3px] ml-[5px] w-[62px]">
        <input
          type="range"
          aria-label="확대 비율"
          defaultValue="8"
          className="block h-2 w-full appearance-none bg-[linear-gradient(#808080,#808080)] bg-[length:100%_1px] bg-center bg-no-repeat [&::-webkit-slider-thumb]:h-2 [&::-webkit-slider-thumb]:w-[5px] [&::-webkit-slider-thumb]:appearance-none [&::-webkit-slider-thumb]:border [&::-webkit-slider-thumb]:border-[#707070] [&::-webkit-slider-thumb]:bg-white"
        />
        <div className="h-[3px] bg-[repeating-linear-gradient(90deg,#202020_0_1px,transparent_1px_3px)]" />
      </div>
      <div className="flex h-full w-[241px] items-center justify-between bg-[#e2e2e0]">
        <div className="flex">{BOTTOM_ICONS.map(([name, icon]) => <BottomIcon key={name} name={name}>{icon}</BottomIcon>)}</div>
        <div className="flex">{BOTTOM_ICONS_RIGHT.map(([name, icon]) => <BottomIcon key={name} name={name}>{icon}</BottomIcon>)}</div>
      </div>
    </div>
  );
}

function ChartPanel() {
  const tab = 'mr-[5px] h-[5px] w-[9px] self-start bg-[#bcbcbc]';
  return (
    <section className="ml-[3px] flex min-w-0 flex-1 flex-col border border-[#80848c] bg-white">
      <div className="relative mt-0.5 ml-[3px] min-h-0 flex-1">
        <StockChart />
        <div className="absolute top-1 left-0.5 flex h-3 items-center text-[13px] leading-3">
          <span className={tab} /><LegendMark className="bg-black" />대기매물(10)
          <span className="ml-1.5" /><LegendMark className="bg-black" />가격차트
          <span className="ml-1.5" /><LegendMark className="bg-[#5c9a1c]" /><span className="text-[#5c9a1c]">가격이평&nbsp; 5</span>
          <span className="ml-1" /><LegendMark className="bg-[#2484c8]" /><span className="text-[#2484c8]">20</span>
          <span className="ml-1" /><LegendMark className="bg-[#0000a0]" /><span className="text-[#0000a0]">60</span>
          <span className="ml-1" /><LegendMark className="bg-[#702048]" /><span className="text-[#702048]">120</span>
        </div>
        <div className="absolute top-[574px] left-0.5 flex h-3 items-center text-[13px] leading-3 text-[#c80010]">
          <span className={tab} /><LegendMark className="bg-[#c80010]" />거래량
        </div>
        <div className="absolute top-[645px] left-0.5 flex h-3 items-center text-[13px] leading-3 text-[#888]">
          <span className={tab} /><LegendMark className="bg-[#888]" />MACD Oscillator(12,26,9)
        </div>
        <div className="absolute top-[3px] right-[70px]"><PaneButtons /></div>
        <div className="absolute top-[573px] right-[70px]"><PaneButtons /></div>
        <div className="absolute top-[644px] right-[70px]"><PaneButtons /></div>
      </div>
      <BottomBar />
    </section>
  );
}

function TitleBar() {
  return (
    <header className="flex h-[22px] shrink-0 items-center border-t border-[#587850] bg-[#24441c] px-1 text-white">
      <span className="h-3 w-3 bg-[#c06408] text-center text-[11px] leading-3 font-bold">1</span>
      <button aria-label="도움말" className="ml-[3px] h-3 w-3 bg-[#808080] text-center text-[11px] leading-3 font-bold">?</button>
      <h1 className="ml-1.5 text-[13px] leading-5">[0560] 주식차트</h1>
      <div className="ml-auto flex items-center gap-1 pr-1">
        {[
          ['분리', <path d="M1.500 5V1.500H5M1.500 1.500L5 5M3.500 7V12.500H13V3.500H7M9 5.500V3.500M7 6.500H13" />],
          ['복사', <path d="M1.500 4.500H9.500V12.500H1.500ZM4 4V2H12.500V10H10M3 8L5 10.500L9 5" />],
          ['캡처', <><path d="M1.500 4.500H4V2.500H7V4.500H13.500V12.500H1.500Z" /><circle cx="7.500" cy="8.500" r="2" /></>],
          ['설정', <><circle cx="7" cy="7.500" r="3.500" /><path d="M7 1.500V4M7 11V13.500M1 7.500H3.500M10.500 7.500H13M3 3.500L4.500 5M9.500 10L11 11.500M11 3.500L9.500 5M4.500 10L3 11.500" /></>],
        ].map(([name, icon]) => (
          <button key={name} aria-label={name} className="h-3.5 w-3.5">
            <svg viewBox="0 0 14 14" className="h-3.5 w-3.5" fill="none" stroke="#c8d0c4" strokeWidth="1.200">{icon}</svg>
          </button>
        ))}
        <span className="w-0.5" />
        {[['최소화', 'M2 11.500H12'], ['최대화', 'M2.500 3.500H12.500V11.500H2.500Z'], ['닫기', 'M2.500 2.500L11.500 11.500M11.500 2.500L2.500 11.500']].map(([name, d]) => (
          <button key={name} aria-label={name} className="h-3.5 w-3.5">
            <svg viewBox="0 0 14 14" className="h-3.5 w-3.5"><path d={d} fill="none" stroke="#c8d0c4" strokeWidth="2" /></svg>
          </button>
        ))}
      </div>
    </header>
  );
}

export default function App() {
  return (
    <div className="flex h-screen min-w-[1100px] flex-col overflow-hidden bg-[#dcdcd6] font-['Liberation_Sans','Noto_Sans_CJK_KR',sans-serif] text-black">
      <TitleBar />
      <div className="flex min-h-0 flex-1 flex-col border-b border-[#606060] p-1 pb-[3px] shadow-[inset_1px_0_#808080,inset_-1px_0_#405838]">
        <div className="flex min-h-0 flex-1 flex-col border border-[#909090]">
          <Toolbar />
          <QuoteBar />
          <main className="flex min-h-0 flex-1 pt-0.5 pr-0.5 pb-[3px] pl-1">
            <Sidebar />
            <ChartPanel />
            <RightTools />
          </main>
        </div>
      </div>
    </div>
  );
}
